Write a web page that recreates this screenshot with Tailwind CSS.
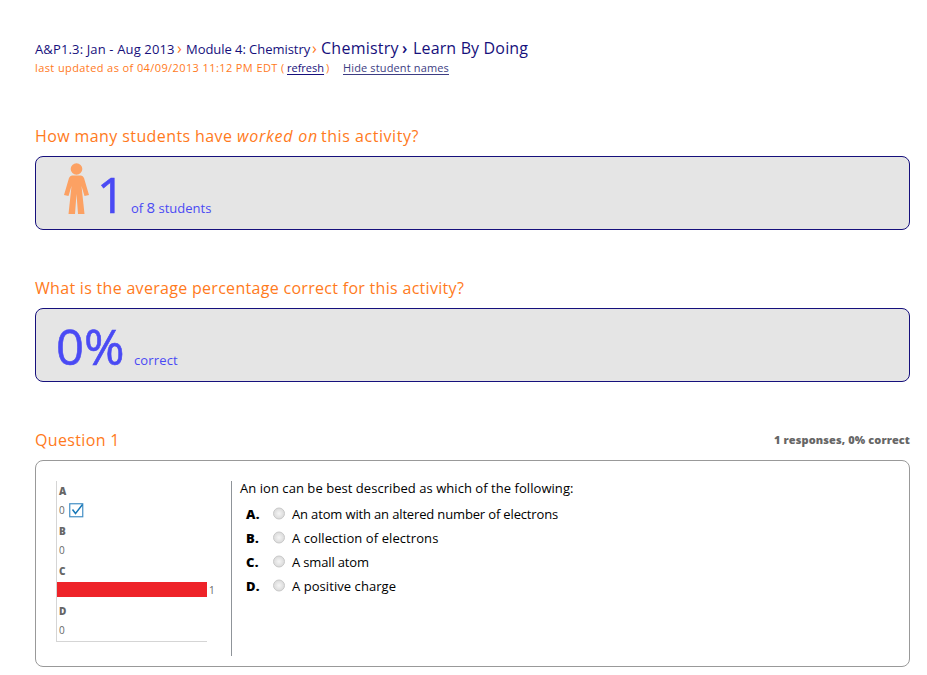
<!DOCTYPE html>
<html lang="en">
<head>
<meta charset="utf-8">
<title>Learn By Doing</title>
<script src="https://cdn.jsdelivr.net/npm/@tailwindcss/browser@4"></script>
</head>
<body class="bg-white font-['Open_Sans','Noto_Sans',sans-serif] text-[13px] text-black">
<main class="h-[675px] w-[927px] overflow-hidden pl-[35px] pr-[17px] pt-[36px]">
  <header class="h-[88px] whitespace-nowrap text-[#16107c]">
    <nav class="flex h-[23px] items-baseline leading-[22px]">
      <a class="w-[142px] tracking-[0.14px]">A&amp;P1.3: Jan - Aug 2013</a>
      <span class="w-[9px] text-base text-[#ff7a1c]">›</span>
      <a class="w-[126px] tracking-[-0.05px]">Module 4: Chemistry</a>
      <span class="w-[9px] text-base text-[#ff7a1c]">›</span>
      <span class="w-[81px] text-base tracking-[0.25px]">Chemistry</span>
      <span class="w-[11px] text-base font-semibold">›</span>
      <span class="text-base tracking-[0.15px]">Learn By Doing</span>
    </nav>
    <p class="flex h-[18px] text-[11px] leading-[18px] text-[#ff7a1c]">
      <span class="w-[252px] tracking-[0.4px]">last updated as of 04/09/2013 11:12 PM EDT (</span>
      <a class="w-[37px] text-[#16107c] underline underline-offset-2">refresh</a>
      <span class="ml-[2px] w-[17px]">)</span>
      <a class="tracking-[0.14px] text-[#3d3d83] underline underline-offset-2">Hide student names</a>
    </p>
  </header>

  <section class="h-[152px]">
    <h2 class="flex h-[32px] whitespace-nowrap text-base leading-6 text-[#ff7a1c]">
      <span class="w-[202px] tracking-[0.4px]">How many students have</span>
      <em class="w-[84px] tracking-[0.75px]">worked on</em>
      <span class="tracking-[0.55px]">this activity?</span>
    </h2>
    <div class="flex h-[74px] items-baseline whitespace-nowrap rounded-[8px] border border-[#16107c] bg-[#e5e5e5] pl-[28px] text-[#4a4af4]">
      <svg class="mt-[6px] h-[51px] w-[25px] self-start" viewBox="0 0 25 51" fill="#fca163">
        <circle cx="12.5" cy="6" r="5.8"/>
        <path d="M8 12.5H17Q19 12.5 20 15L25 32L20.5 33L17.5 23L20.5 51H14L12.5 31L11 51H4.500L7.500 23L4.500 33L0 32L5 15Q6 12.500 8 12.500Z"/>
      </svg>
      <span class="ml-[8px] w-[34px] text-[49px] leading-[74px] [-webkit-text-stroke:0.6px]">1</span>
      <span>of <span class="text-[15px]">8</span> students</span>
    </div>
  </section>

  <section class="h-[152px]">
    <h2 class="h-[32px] whitespace-nowrap text-base leading-6 tracking-[0.3px] text-[#ff7a1c]">What is the average percentage correct for this activity?</h2>
    <div class="flex h-[74px] items-baseline whitespace-nowrap rounded-[8px] border border-[#16107c] bg-[#e5e5e5] pl-[20px] text-[#4a4af4]">
      <span class="w-[78px] text-[49px] leading-[74px] [-webkit-text-stroke:0.6px]">0%</span>
      <span class="tracking-[0.14px]">correct</span>
    </div>
  </section>

  <section>
    <div class="flex h-[32px] justify-between">
      <h2 class="text-base leading-6 tracking-[0.35px] text-[#ff7a1c]">Question 1</h2>
      <strong class="text-[11px] font-extrabold leading-6 tracking-[0.1px] text-[#666]">1 responses, 0% correct</strong>
    </div>
    <div class="flex h-[207px] rounded-[8px] border border-[#999] pl-[20px] pt-[20px]">
      <div class="h-[175px] w-[176px] border-r border-[#8f9499]">
        <div class="h-[161px] w-[151px] border-b border-l border-[#d5d5d5] text-[10px] text-[#666]">
          <div class="h-5 pl-[2px] font-extrabold leading-5">A</div>
          <div class="flex h-5 items-center pb-[2px] pl-[2px]"><span class="w-[10px]">0</span>
            <svg class="h-[15px] w-[15px]" viewBox="0 0 15 15" fill="none"><rect x=".75" y=".75" width="13" height="13" stroke="#438fc5" stroke-width="1.2"/><path d="M3.500 6.500L6.500 10.500L13.500 1.500" stroke="#1878b8" stroke-width="1.500"/></svg>
          </div>
          <div class="h-5 pl-[2px] font-extrabold leading-5">B</div>
          <div class="h-5 pl-[2px] leading-[18px]">0</div>
          <div class="h-5 pl-[2px] font-extrabold leading-5">C</div>
          <div class="flex h-5 items-center pb-[2px]"><div class="mb-[1px] h-[15px] w-[150px] shrink-0 bg-[#ee2329]"></div><span class="ml-[2px]">1</span></div>
          <div class="h-5 pl-[2px] font-extrabold leading-5">D</div>
          <div class="h-5 pl-[2px] leading-[18px]">0</div>
        </div>
      </div>
      <div class="whitespace-nowrap pl-[8px]">
        <p class="h-[22px] leading-[14px] tracking-[0.05px]">An ion can be best described as which of the following:</p>
        <ol>
          <li class="flex h-6 items-center pl-[6px]"><b class="w-[27px] font-extrabold tracking-[0.3px]">A.</b><svg class="mb-[4px] mr-[6px] h-[13px] w-[13px]" viewBox="0 0 13 13"><defs><radialGradient id="dial"><stop stop-color="#f5f5f5"/><stop offset="1" stop-color="#dadada"/></radialGradient></defs><circle cx="6" cy="6.500" r="5.500" fill="url(#dial)" stroke="#c9c9c9"/></svg><span class="tracking-[-0.15px]">An atom with an altered number of electrons</span></li>
          <li class="flex h-6 items-center pl-[6px]"><b class="w-[27px] font-extrabold tracking-[0.3px]">B.</b><svg class="mb-[4px] mr-[6px] h-[13px] w-[13px]" viewBox="0 0 13 13"><circle cx="6" cy="6.500" r="5.500" fill="url(#dial)" stroke="#c9c9c9"/></svg><span class="tracking-[0.08px]">A collection of electrons</span></li>
          <li class="flex h-6 items-center pl-[6px]"><b class="w-[27px] font-extrabold tracking-[0.3px]">C.</b><svg class="mb-[4px] mr-[6px] h-[13px] w-[13px]" viewBox="0 0 13 13"><circle cx="6" cy="6.500" r="5.500" fill="url(#dial)" stroke="#c9c9c9"/></svg><span class="tracking-[-0.15px]">A small atom</span></li>
          <li class="flex h-6 items-center pl-[6px]"><b class="w-[27px] font-extrabold tracking-[0.3px]">D.</b><svg class="mb-[4px] mr-[6px] h-[13px] w-[13px]" viewBox="0 0 13 13"><circle cx="6" cy="6.500" r="5.500" fill="url(#dial)" stroke="#c9c9c9"/></svg><span class="tracking-[0.06px]">A positive charge</span></li>
        </ol>
      </div>
    </div>
  </section>
</main>
</body>
</html>
